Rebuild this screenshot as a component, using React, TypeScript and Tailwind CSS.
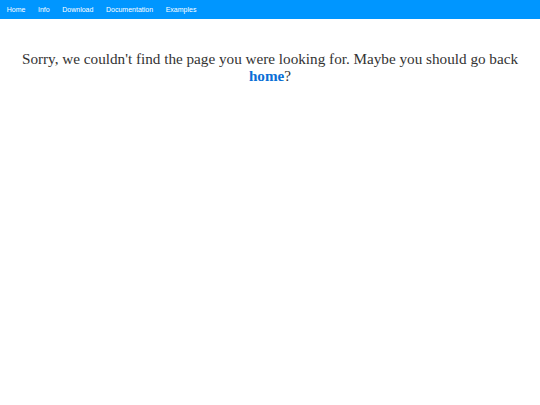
export default function App() {
  const items = ["Home", "Info", "Download", "Documentation", "Examples"];
  return (
    <div className="min-h-[405px] bg-white">
      <nav className="flex h-[19px] items-center bg-[#0096ff] pl-[0.4px]">
        {items.map((it) => (
          <a
            key={it}
            href="#"
            className="px-[6.3px] text-[7px] leading-none text-white"
            style={{ fontFamily: '"Liberation Sans", Arial, sans-serif' }}
          >
            {it}
          </a>
        ))}
      </nav>
      <h1
        className="mt-[31px] px-[10px] text-center text-[15.2px] leading-[17px] font-normal text-[#333]"
        style={{ fontFamily: '"Liberation Serif", "Times New Roman", serif' }}
      >
        Sorry, we couldn't find the page you were looking for. Maybe you should go back{" "}
        <a href="#" className="font-bold text-[#0a6fd6]">
          home
        </a>
        ?
      </h1>
    </div>
  );
}
